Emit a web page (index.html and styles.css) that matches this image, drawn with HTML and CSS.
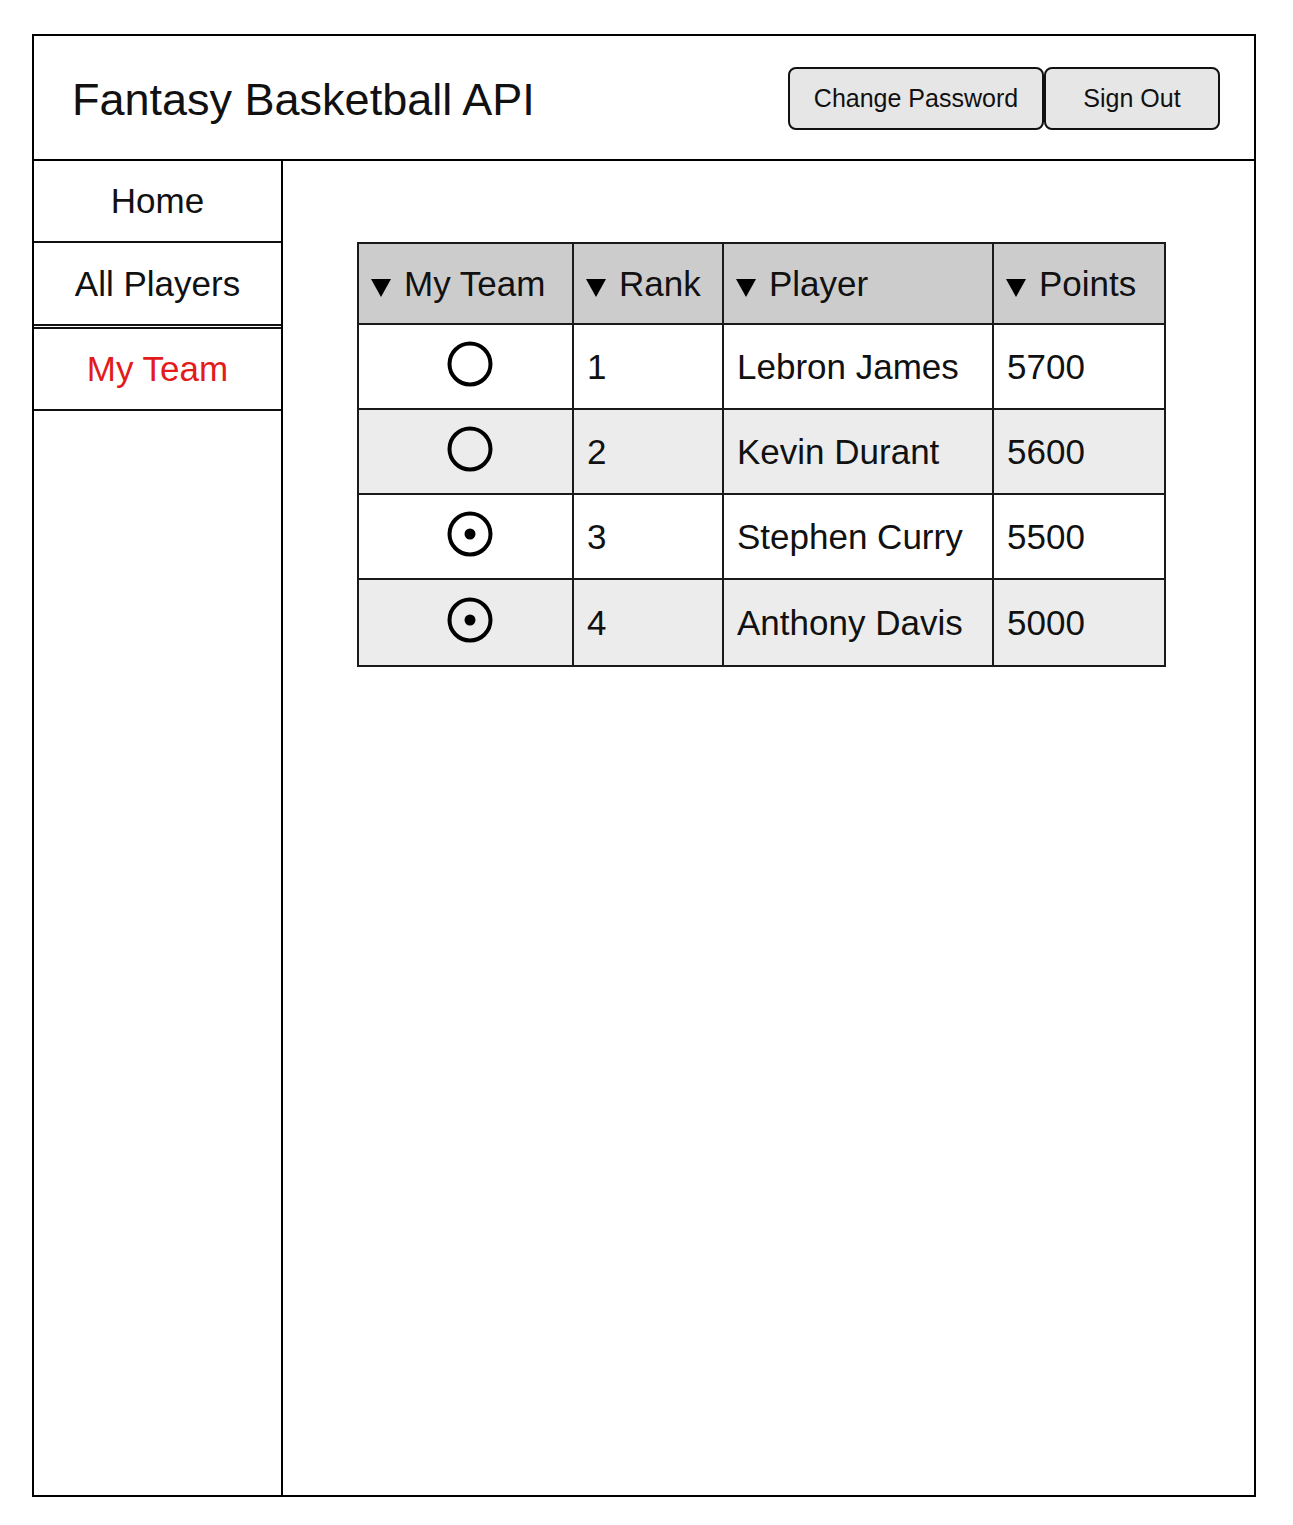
FILE: index.html
```html
<!DOCTYPE html>
<html>
<head>
<meta charset="utf-8">
<title>Fantasy Basketball API</title>
<link rel="stylesheet" href="styles.css">
</head>
<body>
<div class="frame">
  <header class="topbar">
    <h1 class="title">Fantasy Basketball API</h1>
    <div class="actions">
      <button class="btn btn-wide">Change Password</button>
      <button class="btn btn-narrow">Sign Out</button>
    </div>
  </header>
  <div class="body">
    <nav class="sidebar">
      <div class="nav-item">Home</div>
      <div class="nav-item nav-item-gap">All Players</div>
      <div class="nav-item nav-active">My Team</div>
    </nav>
    <main class="content">
      <table class="grid">
        <colgroup>
          <col class="c1"><col class="c2"><col class="c3"><col class="c4">
        </colgroup>
        <thead>
          <tr>
            <th><svg class="tri" width="20" height="18" viewBox="0 0 20 18"><polygon points="0,0 20,0 10,18" fill="#000"/></svg>My Team</th>
            <th><svg class="tri" width="20" height="18" viewBox="0 0 20 18"><polygon points="0,0 20,0 10,18" fill="#000"/></svg>Rank</th>
            <th><svg class="tri" width="20" height="18" viewBox="0 0 20 18"><polygon points="0,0 20,0 10,18" fill="#000"/></svg>Player</th>
            <th><svg class="tri" width="20" height="18" viewBox="0 0 20 18"><polygon points="0,0 20,0 10,18" fill="#000"/></svg>Points</th>
          </tr>
        </thead>
        <tbody>
          <tr>
            <td class="radio-cell"><svg width="46" height="46" viewBox="0 0 46 46"><circle cx="23" cy="23" r="20.5" fill="none" stroke="#000" stroke-width="4"/></svg></td>
            <td>1</td><td>Lebron James</td><td>5700</td>
          </tr>
          <tr class="alt">
            <td class="radio-cell"><svg width="46" height="46" viewBox="0 0 46 46"><circle cx="23" cy="23" r="20.5" fill="none" stroke="#000" stroke-width="4"/></svg></td>
            <td>2</td><td>Kevin Durant</td><td>5600</td>
          </tr>
          <tr>
            <td class="radio-cell"><svg width="46" height="46" viewBox="0 0 46 46"><circle cx="23" cy="23" r="20.5" fill="none" stroke="#000" stroke-width="4"/><circle cx="23" cy="23" r="5.5" fill="#000"/></svg></td>
            <td>3</td><td>Stephen Curry</td><td>5500</td>
          </tr>
          <tr class="alt last">
            <td class="radio-cell"><svg width="46" height="46" viewBox="0 0 46 46"><circle cx="23" cy="23" r="20.5" fill="none" stroke="#000" stroke-width="4"/><circle cx="23" cy="23" r="5.5" fill="#000"/></svg></td>
            <td>4</td><td>Anthony Davis</td><td>5000</td>
          </tr>
        </tbody>
      </table>
    </main>
  </div>
</div>
</body>
</html>
```

FILE: styles.css
```css
* { box-sizing: border-box; }
html, body { margin: 0; padding: 0; background: #fff; }
body {
  font-family: "Liberation Sans", Arial, sans-serif;
  color: #111;
}
.frame {
  margin: 34px 0 0 32px;
  width: 1224px;
  height: 1463px;
  border: 2px solid #000;
  display: flex;
  flex-direction: column;
}
.topbar {
  height: 125px;
  border-bottom: 2px solid #000;
  display: flex;
  align-items: center;
  justify-content: space-between;
  padding: 0 34px 0 38px;
  flex: none;
}
.title {
  margin: 4px 0 0 0;
  font-weight: normal;
  font-size: 45px;
  color: #111;
}
.actions {
  display: flex;
  margin-top: 2px;
}
.btn {
  font-family: "Liberation Sans", Arial, sans-serif;
  font-size: 25px;
  color: #111;
  background: #e6e6e6;
  border: 2px solid #111;
  border-radius: 8px;
  height: 63px;
  padding: 0;
}
.btn-wide { width: 256px; }
.btn-narrow { width: 176px; margin-left: 0; }
.body {
  flex: 1;
  display: flex;
}
.sidebar {
  width: 249px;
  border-right: 2px solid #000;
  flex: none;
}
.nav-item {
  height: 82px;
  border-bottom: 2px solid #111;
  display: flex;
  align-items: center;
  justify-content: center;
  font-size: 35px;
  color: #111;
}
.nav-item-gap {
  height: 83px;
  margin-bottom: 1px;
}
.nav-active {
  border-top: 2px solid #111;
  height: 84px;
  color: #e31b1b;
}
.content {
  flex: 1;
  padding: 81px 0 0 74px;
}
.grid {
  border-collapse: collapse;
  table-layout: fixed;
  width: 807px;
  font-size: 35px;
  color: #111;
}
.c1 { width: 215px; }
.c2 { width: 150px; }
.c3 { width: 270px; }
.c4 { width: 172px; }
.grid th, .grid td {
  border: 2px solid #1a1a1a;
  text-align: left;
  font-weight: normal;
  padding: 0 0 0 12px;
  vertical-align: middle;
  white-space: nowrap;
}
.grid thead tr { height: 81px; background: #cccccc; }
.grid tbody tr { height: 85px; background: #fff; }
.grid tbody tr.alt { background: #ececec; }
.grid tbody tr.last { height: 87px; }
.grid td { padding-left: 13px; }
.tri {
  margin-right: 13px;
  vertical-align: -1px;
}
.grid td.radio-cell {
  text-align: center;
  padding: 0 0 6px 8px;
  line-height: 0;
}
.radio-cell svg { display: inline-block; vertical-align: middle; }
```
